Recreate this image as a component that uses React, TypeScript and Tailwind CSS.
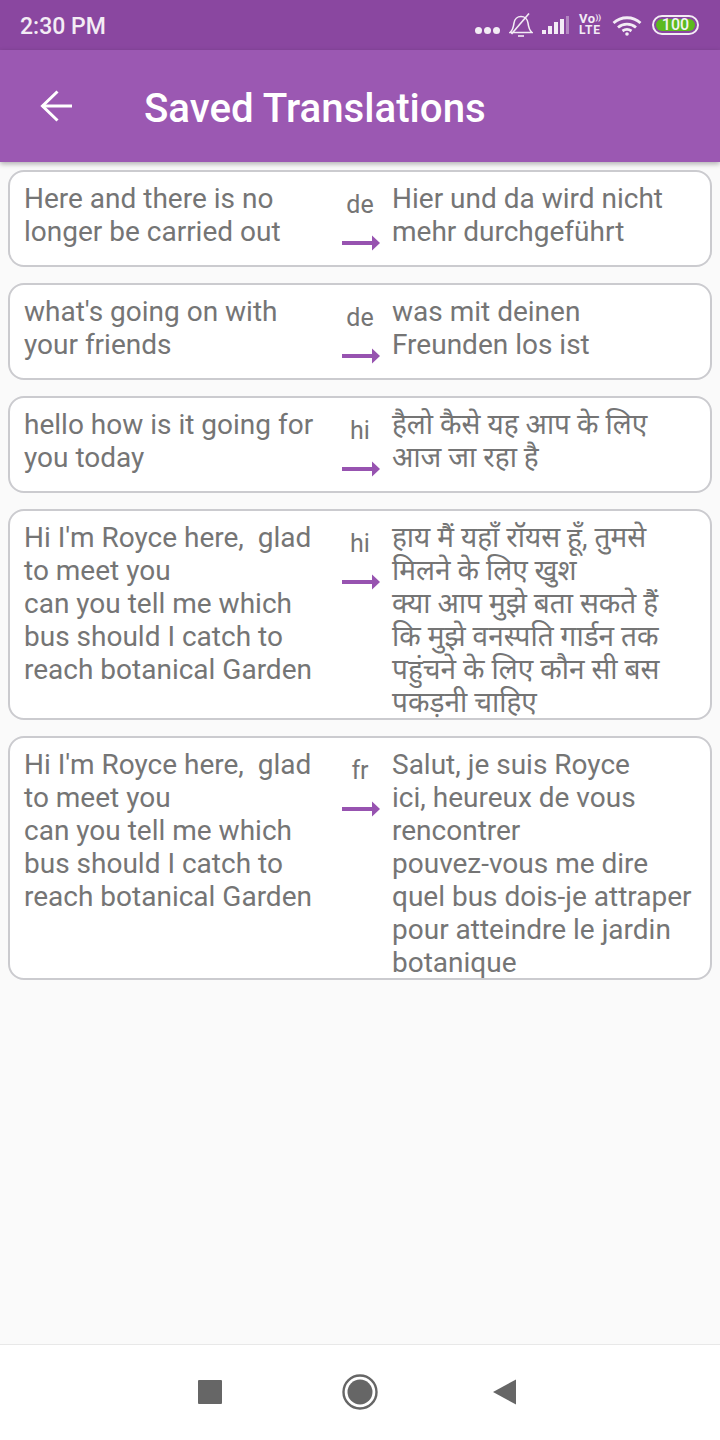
import React from "react";

const cards = [
  { l: "Here and there is no\nlonger be carried out", c: "de", r: "Hier und da wird nicht\nmehr durchgeführt" },
  { l: "what's going on with\nyour friends", c: "de", r: "was mit deinen\nFreunden los ist" },
  { l: "hello how is it going for\nyou today", c: "hi", r: "हैलो कैसे यह आप के लिए\nआज जा रहा है" },
  { l: "Hi I'm Royce here,  glad\nto meet you\ncan you tell me which\nbus should I catch to\nreach botanical Garden", c: "hi", r: "हाय मैं यहाँ रॉयस हूँ, तुमसे\nमिलने के लिए खुश\nक्या आप मुझे बता सकते हैं\nकि मुझे वनस्पति गार्डन तक\nपहुंचने के लिए कौन सी बस\nपकड़नी चाहिए" },
  { l: "Hi I'm Royce here,  glad\nto meet you\ncan you tell me which\nbus should I catch to\nreach botanical Garden", c: "fr", r: "Salut, je suis Royce\nici, heureux de vous\nrencontrer\npouvez-vous me dire\nquel bus dois-je attraper\npour atteindre le jardin\nbotanique" },
];

function Arrow() {
  return (
    <svg width="38" height="16" viewBox="0 0 38 16" className="block">
      <rect x="0" y="6" width="31" height="4" fill="#9753b0" />
      <path d="M30 0.5 L38 8 L30 15.5 Z" fill="#9753b0" />
    </svg>
  );
}

function StatusIcons() {
  return (
    <div className="flex items-center">
      <div className="flex gap-[2px] mt-[10px] mr-[9px]">
        <span className="w-[7px] h-[7px] rounded-full bg-[#f3ecf5]" />
        <span className="w-[7px] h-[7px] rounded-full bg-[#f3ecf5]" />
        <span className="w-[7px] h-[7px] rounded-full bg-[#f3ecf5]" />
      </div>
      <svg width="24" height="24" viewBox="0 0 24 24" fill="none" stroke="#f3ecf5" strokeWidth="1.6" className="mr-[8px]">
        <path d="M1 19.5 H23 C20 17 19.5 14 19 10 C18.5 6 15.5 3.5 12 3.5 C8.5 3.5 5.5 6 5 10 C4.5 14 4 17 1 19.5 Z" />
        <path d="M9 23 H15" />
        <path d="M2.5 21 L20 0.5" />
      </svg>
      <svg width="28" height="20" viewBox="0 0 28 20" className="mr-[10px]" fill="#f3ecf5">
        <rect x="1" y="15" width="4" height="4" />
        <rect x="7" y="11" width="4" height="8" />
        <rect x="13" y="7" width="4" height="12" />
        <rect x="19" y="4" width="4" height="15" />
        <rect x="25" y="1" width="3" height="18" opacity="0.4" />
      </svg>
      <div className="flex flex-col items-start mr-[11px] w-[22px] text-[#f3ecf5] font-bold font-['Roboto',sans-serif]">
        <span className="flex items-start leading-[11px]">
          <span className="text-[13px] leading-[11px] tracking-[0.5px]">Vo</span>
          <span className="text-[8px] leading-[10px]">))</span>
        </span>
        <span className="text-[12px] leading-[13px] tracking-[0.8px]">LTE</span>
      </div>
      <svg width="30" height="21" viewBox="0 0 30 21" fill="none" stroke="#f3ecf5" strokeWidth="2.8" className="mr-[10px]">
        <path d="M1.5 8 C9 1 21 1 28.5 8" />
        <path d="M6 12.5 C11 8 19 8 24 12.5" />
        <path d="M10.5 16 C13.5 13.8 16.5 13.8 19.5 16" />
        <circle cx="15" cy="19" r="1.8" fill="#f3ecf5" stroke="none" />
      </svg>
      <div className="w-[47px] h-[20px] rounded-full border-2 border-[#f3ecf5] p-[2px] flex">
        <div className="flex-1 rounded-full bg-[#5cba1e] flex items-center justify-center text-[#f3f3f3] text-[16px] font-medium leading-none font-['Roboto',sans-serif]">
          100
        </div>
      </div>
    </div>
  );
}

export default function App() {
  return (
    <div className="w-[720px] h-[1440px] flex flex-col bg-[#fafafa] font-['Roboto','Noto_Sans','Noto_Sans_Devanagari','DejaVu_Sans',sans-serif] overflow-hidden">
      <div className="h-[50px] bg-[#8a47a0] flex items-center justify-between pl-[20px] pr-[21px]">
        <span className="text-[#f3ecf5] text-[23px] font-medium leading-none mt-[2px]">2:30 PM</span>
        <StatusIcons />
      </div>
      <div className="h-[112px] bg-[#9b58b2] flex items-center shadow-[0_2px_5px_rgba(0,0,0,0.3)] relative z-10">
        <svg width="34" height="32" viewBox="0 0 34 32" fill="none" stroke="#fff" strokeWidth="3" className="ml-[40px]">
          <path d="M32 16 H2" />
          <path d="M17.5 1.5 L2.5 16 L17.5 30.5" />
        </svg>
        <span className="ml-[70px] text-white text-[40.25px] font-medium leading-none mt-[6px]">Saved Translations</span>
      </div>
      <div className="flex-1 flex flex-col gap-[16px] px-[8px] pt-[8px]">
        {cards.map((c, i) => (
          <div key={i} className="flex min-h-[97px] bg-white rounded-[16px] border-2 border-[#cbcbcf] pt-[10px] text-[#757575] text-[28px] leading-[33px]">
            <div className="w-[332px] pl-[14px] whitespace-pre-wrap shrink-0 -mb-[1px]">{c.l}</div>
            <div className="w-[36px] shrink-0 flex flex-col items-center">
              <span className="text-[25px] leading-[33px] mt-[6px] text-center">{c.c}</span>
              <div className="mt-[14px] self-start"><Arrow /></div>
            </div>
            <div className="pl-[14px] whitespace-pre-wrap flex-1 -mb-[1px]">{c.r}</div>
          </div>
        ))}
      </div>
      <div className="h-[96px] bg-white border-t border-[#e8e8e8] flex items-center pb-[1px]">
        <div className="flex items-center ml-[198px]">
          <span className="w-[24px] h-[24px] bg-[#666666] rounded-[1px]" />
          <svg width="36" height="36" viewBox="0 0 36 36" className="ml-[120px]">
            <circle cx="18" cy="18" r="16.5" fill="none" stroke="#666666" strokeWidth="2.4" />
            <circle cx="18" cy="18" r="12.5" fill="#666666" />
          </svg>
          <svg width="24" height="26" viewBox="0 0 24 26" className="ml-[114px]"><path d="M24 0.5 V25.5 L1 13 Z" fill="#666666" /></svg>
        </div>
      </div>
    </div>
  );
}
